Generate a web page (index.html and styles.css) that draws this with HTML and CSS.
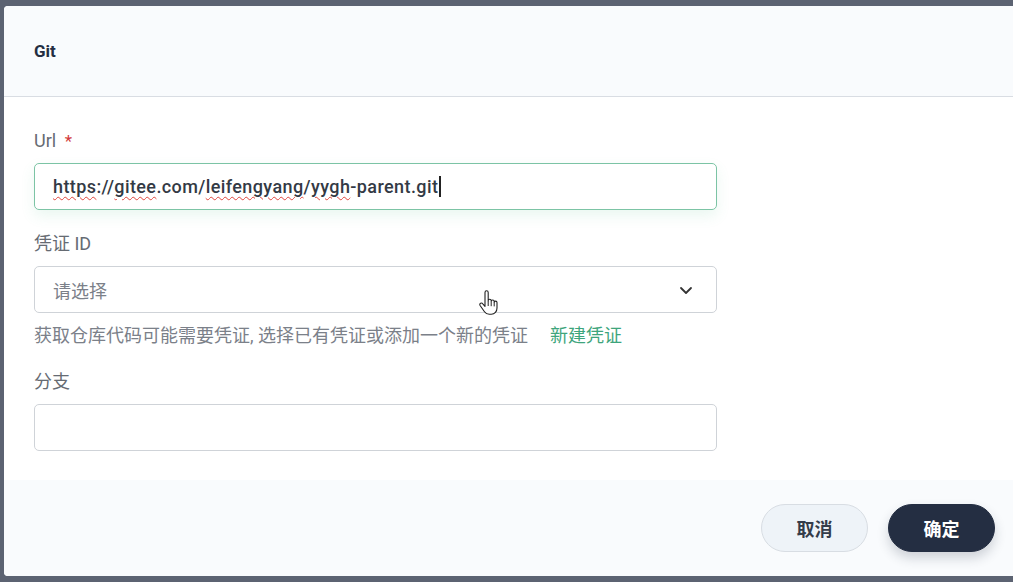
FILE: index.html
```html
<!DOCTYPE html>
<html lang="zh">
<head>
<meta charset="utf-8">
<link rel="stylesheet" href="styles.css">
</head>
<body>
<div class="backdrop">
  <div class="modal">
    <div class="modal-header">
      <h1 class="title">Git</h1>
    </div>
    <div class="modal-body">
      <div class="field">
        <label class="label">Url <span class="req">*</span></label>
        <div class="input focused"><span class="value"><span class="sp">https</span>://<span class="sp">gitee</span>.com/<span class="sp">leifengyang</span>/<span class="sp">yygh</span>-parent.git</span><span class="caret"></span></div>
      </div>
      <div class="field">
        <label class="label">凭证 ID</label>
        <div class="input select">
          <span class="placeholder">请选择</span>
          <svg class="chev" width="16" height="16" viewBox="0 0 16 16"><path d="M3 6l5 5 5-5" fill="none" stroke="#333" stroke-width="1.8" stroke-linecap="round" stroke-linejoin="round"/></svg>
        </div>
        <p class="help">获取仓库代码可能需要凭证, 选择已有凭证或添加一个新的凭证<a class="link">新建凭证</a></p>
      </div>
      <div class="field">
        <label class="label">分支</label>
        <div class="input"></div>
      </div>
    </div>
    <div class="modal-footer">
      <button class="btn btn-cancel">取消</button>
      <button class="btn btn-ok">确定</button>
    </div>
  </div>
  <svg class="cursor" width="22" height="26" viewBox="0 0 22 26"><path d="M7 2.5c0-1 .8-1.7 1.6-1.7s1.6.7 1.6 1.7v8.2c0-.9.7-1.5 1.5-1.5s1.5.6 1.5 1.5v.8c0-.9.7-1.5 1.5-1.5s1.5.6 1.5 1.5v1c0-.9.6-1.4 1.4-1.4s1.4.6 1.4 1.5v5.5c0 3.3-2.3 6.2-5.7 6.2h-2c-2.2 0-3.6-.9-4.8-2.6L2.1 15.5c-.6-.9-.3-1.9.5-2.3.8-.4 1.7-.1 2.2.6L7 16.4V2.5z" fill="#fff" stroke="#222" stroke-width="1.1" stroke-linejoin="round"/><path d="M10.2 11v5M13.2 12v4.2M16.2 12.7v3.7" stroke="#222" stroke-width="1" fill="none"/></svg>
</div>
</body>
</html>
```
FILE: styles.css
```css
* { box-sizing: border-box; }
html, body { margin: 0; padding: 0; }
body {
  width: 1013px;
  height: 582px;
  overflow: hidden;
  background: #5c6372;
  font-family: Roboto, "Noto Sans CJK SC", sans-serif;
}
.backdrop {
  position: relative;
  padding: 6px 0 0 4px;
  height: 582px;
}
.modal {
  width: 1040px;
  height: 570px;
  background: #fff;
  border-radius: 4px 0 0 4px;
  display: flex;
  flex-direction: column;
  overflow: hidden;
}
.modal-header {
  height: 91px;
  background: #f9fbfd;
  border-bottom: 1px solid #d9dde3;
  padding: 0 30px;
  display: flex;
  align-items: center;
}
.title {
  margin: 0;
  font-size: 17px;
  font-weight: 700;
  color: #242e42;
}
.modal-body {
  flex: 1;
  padding: 32px 30px 0 30px;
  display: flex;
  flex-direction: column;
}
.field { width: 683px; margin-bottom: 22px; }
.label {
  display: block;
  font-size: 18px;
  color: #666b73;
  line-height: 24px;
  margin-bottom: 10px;
}
.req { color: #d23b3b; margin-left: 4px; font-size: 17px; }
.input {
  height: 47px;
  border: 1px solid #cfd3d8;
  border-radius: 5px;
  background: #fff;
  display: flex;
  align-items: center;
  padding: 0 18px;
}
.input.focused {
  border-color: #7cc4a5;
  box-shadow: 0 6px 14px rgba(85, 188, 138, 0.12);
}
.value {
  font-size: 18px;
  font-weight: 500;
  color: #333a45;
  letter-spacing: 0.4px;
}
.sp {
  text-decoration: underline wavy #e0453c;
  text-decoration-thickness: 1px;
  text-underline-offset: 3px;
}
.caret {
  display: inline-block;
  width: 2px;
  height: 21px;
  background: #222;
  margin-left: 1px;
}
.select { justify-content: space-between; padding-right: 22px; }
.placeholder { font-size: 18px; color: #7b8089; }
.chev { display: block; }
.help {
  margin: 11px 0 0;
  font-size: 18px;
  color: #7b8089;
  line-height: 24px;
}
.link { color: #3ea57c; margin-left: 22px; }
.modal-footer {
  height: 96px;
  background: #f9fbfd;
  display: flex;
  align-items: center;
  justify-content: flex-start;
  padding-left: 757px;
  gap: 20px;
}
.btn {
  width: 107px;
  height: 48px;
  border-radius: 24px;
  font-family: inherit;
  font-size: 18px;
  font-weight: 700;
  cursor: pointer;
}
.btn-cancel {
  background: #eef3f8;
  border: 1px solid #d8dde3;
  color: #343c4a;
}
.btn-ok {
  background: #242e42;
  border: 1px solid #242e42;
  color: #fff;
  box-shadow: 0 6px 12px rgba(36, 46, 66, 0.2);
}
.cursor {
  position: absolute;
  left: 478px;
  top: 290px;
}
```
